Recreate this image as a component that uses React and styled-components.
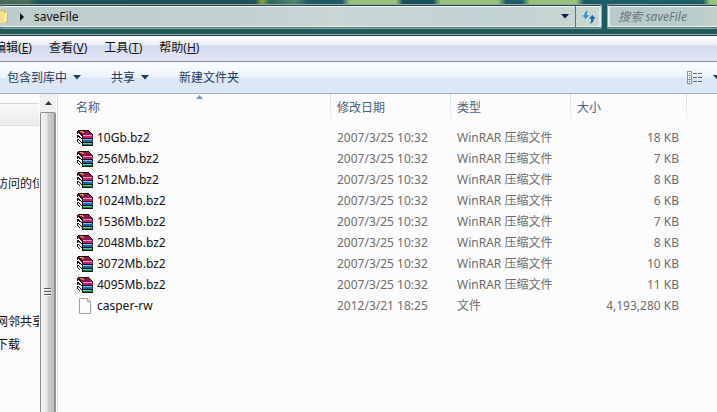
import React from 'react';
import styled, { createGlobalStyle } from 'styled-components';

const Global = createGlobalStyle`
  * { box-sizing: border-box; }
  body {
    margin: 0;
    overflow: hidden;
    font: 12px/20px "Noto Sans", "Noto Sans CJK SC", sans-serif;
    color: #111;
    background: #fcfcfc;
  }
  button, input {
    font: inherit;
    color: inherit;
    margin: 0;
    padding: 0;
    border: 0;
    background: none;
  }
  button { display: flex; align-items: center; white-space: nowrap; }
`;

const Window = styled.div`
  display: flex;
  flex-direction: column;
  height: 100vh;
`;

const Glass = styled.header`
  display: flex;
  gap: 5px;
  padding: 4px 0 5px;
  border-bottom: 1px solid #92b2b0;
  background:
    linear-gradient(to bottom, transparent 4px, #1f5b5d 20px),
    linear-gradient(to right,
      #466a58 0, #4b6d59 28px, #1d5358 38px, #1d5358 255px,
      #8aa52f 262px, #2a6663 270px, #55866c 295px, #1d5c66 308px,
      #1d5c66 342px, #98c27a 350px, #98c27a 396px, #174f5b 403px,
      #174f5b 433px, #98c27a 441px, #98c27a 498px, #1d5c66 506px,
      #1d5c66 522px, #98c27a 530px, #98c27a 576px, #1d5c66 584px,
      #1d5c66 703px, #98c27a 710px);
`;

const GlassBox = styled.div`
  display: flex;
  height: 25px;
  border: 1px solid #8fa9a5;
  border-left-width: ${(p) => (p.$open === 'left' ? 0 : '1px')};
  border-right-width: ${(p) => (p.$open === 'right' ? 0 : '1px')};
  border-radius: 2px;
  box-shadow:
    inset 0 1px #29484b,
    inset 0 2px #eef4f3,
    inset 0 -1px #547672,
    inset 0 -2px #eef4f3,
    inset ${(p) => (p.$open === 'left' ? '-2px' : '2px')} 0 #e3ecea;
  background: linear-gradient(to right, ${(p) => p.$tint});
`;

const Address = styled(GlassBox)`
  flex: 603;
  align-items: center;
`;

const Search = styled(GlassBox)`
  flex: 109;

  input {
    width: 100%;
    min-width: 0;
    padding-left: 10px;
    outline: none;
    font-style: italic;
  }
  input::placeholder { color: #6d7878; opacity: 1; }
`;

const Crumb = styled.button`
  gap: 10px;
  flex: 1;
`;

const DropButton = styled.button`
  width: 20px;
  height: 21px;
  justify-content: center;
`;

const Refresh = styled.button`
  width: 26px;
  height: 21px;
  justify-content: center;
  border-left: 1px solid #5b7376;
`;

const MenuBar = styled.nav`
  display: flex;
  gap: 17px;
  height: 27px;
  padding-bottom: 1px;
  overflow: hidden;
  border-top: 1px solid #27393c;
  border-bottom: 1px solid #868a9c;
  background: linear-gradient(to bottom, #fff 0, #e9eef7 9px, #d4dbed 10px, #e1e6f6 24px);

  button:first-child { margin-left: -6px; }
`;

const CommandBar = styled.div`
  display: flex;
  align-items: center;
  gap: 30px;
  height: 32px;
  padding-left: 7px;
  overflow: hidden;
  color: #1e395b;
  border-bottom: 1px solid #a0afc8;
  background: linear-gradient(to bottom, #fbfdff 0, #edf4fc 15px, #dde8f6 16px, #dce7f5 100%);
`;

const Command = styled.button`
  gap: 6px;
`;

const ViewCommand = styled(Command)`
  gap: 11px;
  margin-left: auto;
  margin-right: -4px;
`;

const Body = styled.div`
  display: flex;
  flex: 1;
  min-height: 0;
`;

const Sidebar = styled.aside`
  width: 39px;
  padding-top: 9px;
  overflow: hidden;
`;

const SideHeading = styled.div`
  height: 23px;
  border-top: 1px solid #d6d6d6;
  border-bottom: 1px solid #dfdfdf;
  background: linear-gradient(to bottom, #f9f9f9, #ebebeb);
`;

const SideGroup = styled.nav`
  display: flex;
  flex-direction: column;
  gap: 3px;
  margin: ${(p) => p.$space} 0 0 -4px;

  a { color: #111; text-decoration: none; white-space: nowrap; }
`;

const ScrollBar = styled.div`
  display: flex;
  flex-direction: column;
  width: 16px;
  margin-left: 1px;
  background: #f0f0f0;
`;

const ScrollUp = styled.button`
  height: 18px;
  justify-content: center;
`;

const Thumb = styled.div`
  display: flex;
  flex: 1;
  justify-content: center;
  padding-top: 175px;
  border: 1px solid #8e8e8e;
  border-right: 2px solid #929294;
  border-bottom: 0;
  border-radius: 2px 2px 0 0;
  background: linear-gradient(to right, #f6f6f6 0, #e7e7e8 45%, #cfcfd1 55%, #bdbdc0 100%);
`;

const Files = styled.main`
  flex: 1;
  min-width: 0;
  margin-left: 1px;
  border-left: 1px solid #d5e2ee;
`;

const Table = styled.table`
  width: 100%;
  table-layout: fixed;
  border-collapse: separate;
  border-spacing: 0;

  tbody::before { content: ""; display: block; height: 7px; }
`;

const Col = styled.col`
  width: ${(p) => p.$width};
`;

const HeadCell = styled.th`
  position: relative;
  height: 26px;
  padding: 2px 0 0 ${(p) => (p.$first ? '18px' : '6px')};
  text-align: left;
  font-weight: 400;
  color: #4c607a;
  border-right: 1px solid;
  border-image: linear-gradient(to bottom, #d3dfec, #e9eff6 80%, #fcfcfc) 1;
`;

const SortMark = styled.svg`
  position: absolute;
  top: 1px;
  left: calc(50% + 2px);
`;

const Cell = styled.td`
  height: 21px;
  padding: 0 8px 0 6px;
  line-height: 21px;
  white-space: nowrap;
  color: #6d6d6d;
  text-align: ${(p) => (p.$right ? 'right' : 'left')};
`;

const NameCell = styled(Cell)`
  padding-left: 19px;
  color: #111;
`;

const FileName = styled.div`
  display: flex;
  align-items: center;
  gap: 4px;
`;

const Down = ({ color }) => (
  <svg width="8" height="5" viewBox="0 0 8 5"><path d="M0 0h8L4 4.6z" fill={color} /></svg>
);

const FolderIcon = () => (
  <svg width="9" height="16" viewBox="0 0 9 16">
    <path d="M0 1h5l1 2h2v10l-2 1H0z" fill="#d9b54a" />
    <path d="M0 2h4v12H0z" fill="#f3df8c" />
    <path d="M4 4l3-1v9l-3 2z" fill="#f8eaa8" />
  </svg>
);

const RefreshIcon = () => (
  <svg width="16" height="16" viewBox="0 0 16 16">
    <path d="M6.500 1C3.600 2 3 4 3 6H.5L4.700 10.500 9 6H6.300C6.300 4 6.500 2.500 7.500 1z" fill="#3d8cc8" stroke="#e4f1f8" strokeWidth=".6" />
    <path d="M9.500 15c2.900-1 3.500-3 3.500-5h2.500L11.300 5.500 7 10h2.700c0 2-.2 3.500-1.200 5z" fill="#2368a8" stroke="#e4f1f8" strokeWidth=".6" />
  </svg>
);

const ViewIcon = () => (
  <svg width="15" height="13" viewBox="0 0 15 13" shapeRendering="crispEdges">
    <path d="M0 0h5v13H0z" fill="#8795a9" />
    {[1, 5, 9].map((y) => (
      <g key={y}>
        <path d={`M1 ${y}h3v3H1z`} fill="#fff" />
        <path d={`M2 ${y + 1}h1v1H2z`} fill="#294d80" />
        <path d={`M6 ${y + 1}h4v1H6zM11 ${y + 1}h4v1h-4z`} fill="#596a82" />
      </g>
    ))}
  </svg>
);

const ArchiveIcon = () => (
  <svg width="16" height="16" viewBox="0 0 16 16" shapeRendering="crispEdges">
    <path d="M0 1h1V0h11v1h1v1h1v1h1v1h1v12H5v-1H4v-1H2v-1H1v-1H0V9h1V8H0V5h1V4H0z" fill="#1b1014" />
    <path d="M1 1h11v1h1v1h1v1h1v1H5V4H4V3H3V2H1z" fill="#8e164c" />
    <path d="M3 1h3v1h1v1H5V2H3z" fill="#e3a13a" />
    <path d="M6 5h9v1H6z" fill="#f59ac4" />
    <path d="M6 6h10v2H6z" fill="#c2206f" />
    <path d="M6 9h9v1H6z" fill="#7cc0ee" />
    <path d="M6 10h10v2H6z" fill="#1e62ab" />
    <path d="M6 13h9v1H6z" fill="#5ed295" />
    <path d="M6 14h10v1H6z" fill="#0c8248" />
    <path d="M1 3h1v1h1v1h1v1h1v2H4V7H3V6H2V5H1zM1 7h1v1h2v1h1v3H4v-1H3v-1H2V9H1zM1 10h1v1h1v1h1v1h1v2H4v-1H3v-1H2v-1H1z" fill="#f3f3f3" />
  </svg>
);

const PageIcon = () => (
  <svg width="16" height="16" viewBox="0 0 16 16">
    <path d="M2.500.5h8l3 3v12h-11z" fill="#fbfbfb" stroke="#a0a0a0" />
    <path d="M10.500.5v3h3" fill="#e6e6e6" stroke="#a0a0a0" />
  </svg>
);

const Grip = () => (
  <svg width="7" height="8" viewBox="0 0 7 8" shapeRendering="crispEdges">
    <path d="M0 0h7v1H0zM0 3h7v1H0zM0 6h7v1H0z" fill="#55585c" />
    <path d="M0 1h7v1H0zM0 4h7v1H0zM0 7h7v1H0z" fill="#f4f4f4" />
  </svg>
);

const menus = [['编辑', 'E'], ['查看', 'V'], ['工具', 'T'], ['帮助', 'H']];

const files = [
  ['10Gb.bz2', '18 KB'],
  ['256Mb.bz2', '7 KB'],
  ['512Mb.bz2', '8 KB'],
  ['1024Mb.bz2', '6 KB'],
  ['1536Mb.bz2', '7 KB'],
  ['2048Mb.bz2', '8 KB'],
  ['3072Mb.bz2', '10 KB'],
  ['4095Mb.bz2', '11 KB'],
].map(([name, size]) => ({ name, size, date: '2007/3/25 10:32', type: 'WinRAR 压缩文件', archive: true }));
files.push({ name: 'casper-rw', size: '4,193,280 KB', date: '2012/3/21 18:25', type: '文件' });

export default function App() {
  return (
    <Window>
      <Global />
      <Glass>
        <Address $open="left" $tint="#bccdcc, #c1d1d1 40%, #c9d6d4 55%, #c2d3d5 80%, #c9d6cf">
          <FolderIcon />
          <Crumb>
            <svg width="15" height="8" viewBox="0 0 15 8"><path d="M11 0l4 4-4 4z" fill="#111" /></svg>
            saveFile
          </Crumb>
          <DropButton aria-label="历史记录"><Down color="#0c1b4d" /></DropButton>
          <Refresh aria-label="刷新"><RefreshIcon /></Refresh>
        </Address>
        <Search $open="right" $tint="#b7cbcb, #b9cccc 80%, #c3d3c8">
          <input type="search" aria-label="搜索" placeholder="搜索 saveFile" />
        </Search>
      </Glass>
      <MenuBar>
        {menus.map(([label, key]) => (
          <button key={key}>{label}(<u>{key}</u>)</button>
        ))}
      </MenuBar>
      <CommandBar>
        <Command>包含到库中<Down color="#1e395b" /></Command>
        <Command>共享<Down color="#1e395b" /></Command>
        <Command>新建文件夹</Command>
        <ViewCommand aria-label="更改视图"><ViewIcon /><Down color="#1e395b" /></ViewCommand>
      </CommandBar>
      <Body>
        <Sidebar>
          <SideHeading />
          <SideGroup $space="48px"><a href="#recent">访问的位</a></SideGroup>
          <SideGroup $space="118px">
            <a href="#shared">网邻共享</a>
            <a href="#downloads">下载</a>
          </SideGroup>
        </Sidebar>
        <ScrollBar>
          <ScrollUp aria-label="向上滚动">
            <svg width="7" height="4" viewBox="0 0 7 4"><path d="M3.500 0L7 4H0z" fill="#333" /></svg>
          </ScrollUp>
          <Thumb><Grip /></Thumb>
        </ScrollBar>
        <Files>
          <Table>
            <colgroup>
              <Col $width="273px" />
              <Col $width="120px" />
              <Col $width="120px" />
              <Col $width="116px" />
              <Col $width="auto" />
            </colgroup>
            <thead>
              <tr>
                <HeadCell $first>
                  名称
                  <SortMark width="7" height="4" viewBox="0 0 7 4"><path d="M3.500 0L7 4H0z" fill="#6f9ab8" /></SortMark>
                </HeadCell>
                <HeadCell>修改日期</HeadCell>
                <HeadCell>类型</HeadCell>
                <HeadCell>大小</HeadCell>
                <td />
              </tr>
            </thead>
            <tbody>
              {files.map((f) => (
                <tr key={f.name}>
                  <NameCell>
                    <FileName>{f.archive ? <ArchiveIcon /> : <PageIcon />}{f.name}</FileName>
                  </NameCell>
                  <Cell>{f.date}</Cell>
                  <Cell>{f.type}</Cell>
                  <Cell $right>{f.size}</Cell>
                  <td />
                </tr>
              ))}
            </tbody>
          </Table>
        </Files>
      </Body>
    </Window>
  );
}
